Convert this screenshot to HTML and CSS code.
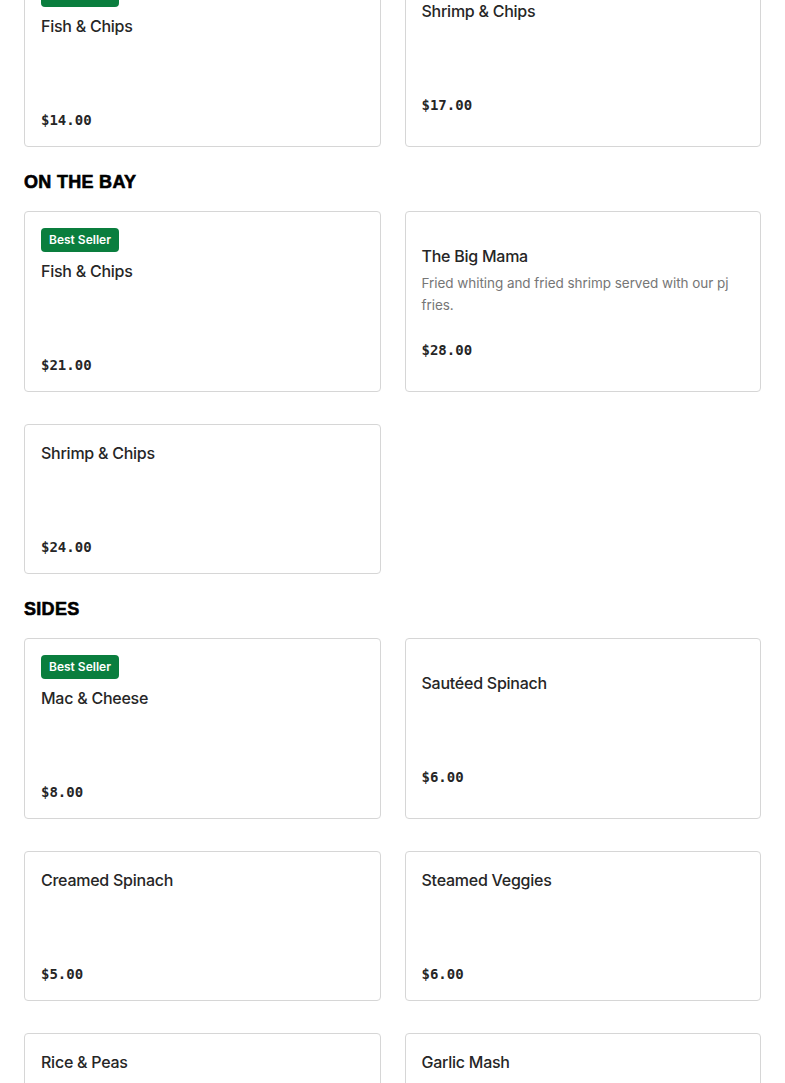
FILE: index.html
```html
<!DOCTYPE html>
<html lang="en">
<head>
<meta charset="utf-8">
<title>Menu</title>
<link rel="stylesheet" href="styles.css">
</head>
<body>
<main class="menu">
  <section class="section section--first">
    <div class="grid">
      <article class="card">
        <span class="badge">Best Seller</span>
        <h3 class="title">Fish &amp; Chips</h3>
        <p class="desc"></p>
        <p class="price">$14.00</p>
      </article>
      <article class="card">
        <h3 class="title">Shrimp &amp; Chips</h3>
        <p class="desc"></p>
        <p class="price">$17.00</p>
      </article>
    </div>
  </section>

  <section class="section">
    <h2 class="heading">ON THE BAY</h2>
    <div class="grid">
      <article class="card">
        <span class="badge">Best Seller</span>
        <h3 class="title">Fish &amp; Chips</h3>
        <p class="desc"></p>
        <p class="price">$21.00</p>
      </article>
      <article class="card">
        <h3 class="title">The Big Mama</h3>
        <p class="desc">Fried whiting and fried shrimp served with our pj fries.</p>
        <p class="price">$28.00</p>
      </article>
      <article class="card">
        <h3 class="title">Shrimp &amp; Chips</h3>
        <p class="desc"></p>
        <p class="price">$24.00</p>
      </article>
    </div>
  </section>

  <section class="section">
    <h2 class="heading">SIDES</h2>
    <div class="grid">
      <article class="card">
        <span class="badge">Best Seller</span>
        <h3 class="title">Mac &amp; Cheese</h3>
        <p class="desc"></p>
        <p class="price">$8.00</p>
      </article>
      <article class="card">
        <h3 class="title">Sautéed Spinach</h3>
        <p class="desc"></p>
        <p class="price">$6.00</p>
      </article>
      <article class="card">
        <h3 class="title">Creamed Spinach</h3>
        <p class="desc"></p>
        <p class="price">$5.00</p>
      </article>
      <article class="card">
        <h3 class="title">Steamed Veggies</h3>
        <p class="desc"></p>
        <p class="price">$6.00</p>
      </article>
      <article class="card">
        <h3 class="title">Rice &amp; Peas</h3>
        <p class="desc"></p>
        <p class="price">$5.00</p>
      </article>
      <article class="card">
        <h3 class="title">Garlic Mash</h3>
        <p class="desc"></p>
        <p class="price">$6.00</p>
      </article>
    </div>
  </section>
</main>
</body>
</html>
```
FILE: styles.css
```css
* { box-sizing: border-box; }

html, body {
  margin: 0;
  padding: 0;
  background: #ffffff;
}

body {
  font-family: Inter, "Noto Sans", "Liberation Sans", sans-serif;
  color: #2b2b2b;
}

.menu {
  padding: 0 24px 40px;
}

.section--first {
  margin-top: -34px;
}

.heading {
  margin: 0;
  padding-top: 23px;
  margin-bottom: 17px;
  font-family: "Liberation Sans", Arial, sans-serif;
  font-weight: 700;
  font-size: 18px;
  line-height: 24px;
  color: #000;
  -webkit-text-stroke: 0.6px #000;
  letter-spacing: 0.3px;
}

.grid {
  display: grid;
  grid-template-columns: 1fr 1fr;
  column-gap: 24px;
  row-gap: 32px;
}

.card {
  display: flex;
  flex-direction: column;
  justify-content: center;
  align-items: flex-start;
  min-height: 150px;
  padding: 16px;
  border: 1px solid #d6d6d6;
  border-radius: 4px;
  background: #fff;
}

.badge {
  display: inline-block;
  height: 24px;
  padding: 0 8px;
  margin-bottom: 7px;
  border-radius: 4px;
  background: #0a7e3e;
  color: #fff;
  font-size: 12px;
  font-weight: 600;
  line-height: 24px;
}

.title {
  margin: 0;
  font-size: 16px;
  font-weight: 500;
  line-height: 24px;
  letter-spacing: -0.25px;
  color: #262626;
}

.desc {
  margin: 4px 0 22px;
  min-height: 46px;
  font-size: 13.5px;
  line-height: 22px;
  letter-spacing: -0.05px;
  color: #767676;
}

.price {
  margin: 0;
  font-family: "DejaVu Sans Mono", "Liberation Mono", monospace;
  font-weight: 700;
  font-size: 14px;
  line-height: 20px;
  color: #262626;
}
```
